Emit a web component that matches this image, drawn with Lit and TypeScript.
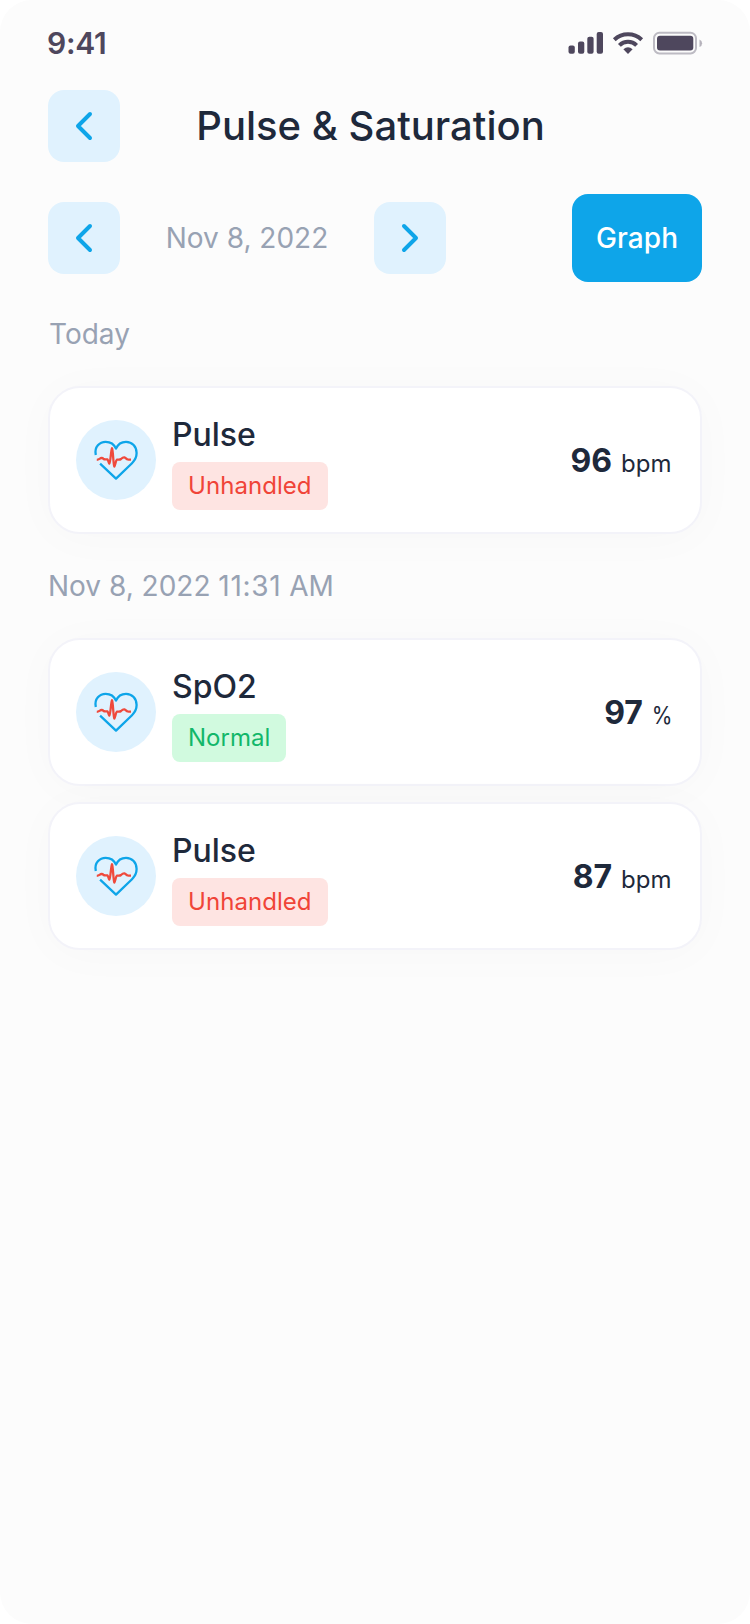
import { LitElement, html, css, svg } from "lit";
import { customElement, property } from "lit/decorators.js";
import { classMap } from "lit/directives/class-map.js";

interface Reading {
  name: string;
  status: "Unhandled" | "Normal";
  value: number;
  unit: string;
}

@customElement("status-bar")
class StatusBar extends LitElement {
  static styles = css`
    :host { display: flex; justify-content: space-between; height: 90px; box-sizing: border-box; padding: 26px 47px 0 47px; color: #4e475d; }
    .time { font-size: 30px; line-height: 34px; font-weight: 600; letter-spacing: -0.3px; font-feature-settings: "calt" 0; }
    .icons { display: block; }
  `;
  render() {
    return html`
      <span class="time">9:41</span>
      <svg class="icons" width="136" height="34" viewBox="0 0 136 34" fill="currentColor">
        <rect x="1.5" y="19.5" width="6.3" height="8.2" rx="2" />
        <rect x="11" y="15.5" width="6.3" height="12.2" rx="2" />
        <rect x="20.3" y="10.8" width="6.3" height="16.9" rx="2" />
        <rect x="29.7" y="6" width="6.3" height="21.7" rx="2" />
        <g fill="none" stroke="currentColor" stroke-width="4">
          <path d="M47.3 13.8A20 20 0 0 1 74.7 13.8" />
          <path d="M52.4 19.3A12.2 12.2 0 0 1 69.6 19.3" />
        </g>
        <path d="M61 28L56.4 23.3Q61 19.2 65.6 23.3Z" />
        <rect x="87" y="6.8" width="42" height="20.6" rx="5.5" fill="none" stroke="currentColor" stroke-width="2" opacity="0.36" />
        <rect x="90" y="9.7" width="36.3" height="14.8" rx="3" />
        <path d="M132.5 13.5v7.5a4 4 0 0 0 0-7.5z" opacity="0.4" />
      </svg>
    `;
  }
}

@customElement("arrow-button")
class ArrowButton extends LitElement {
  @property() direction: "left" | "right" = "left";
  static styles = css`
    :host { display: block; flex: none; }
    .button { display: flex; align-items: center; justify-content: center; width: 72px; height: 72px; padding: 0; border: 0; border-radius: 16px; background: #e0f2fe; color: #0ea5e9; }
    .arrow { display: block; }
  `;
  render() {
    const d = this.direction === "left" ? "M28 10L16 22L28 34" : "M16 10L28 22L16 34";
    return html`<button class="button" aria-label=${this.direction === "left" ? "Back" : "Next"}>
      <svg class="arrow" width="44" height="44" viewBox="0 0 44 44" fill="none" stroke="currentColor" stroke-width="4" stroke-linecap="round" stroke-linejoin="round"><path d=${d} /></svg>
    </button>`;
  }
}

const heart = svg`
  <path d="M19.8 35C18 26.6 23.8 21.8 29.7 21.8C34.3 21.8 38.2 24.4 40 28.6C41.8 24.4 45.4 21.8 50 21.8C56.2 21.8 60.6 26.8 60.6 33C60.6 37.6 58.6 40.6 56 43.2L40 58.6L24.1 43.7" stroke="#0ea5e9" />
  <path d="M20.8 39.8C22.6 39.8 23.2 38.9 24.6 38.2C25.7 37.8 26.8 38.1 27.7 39C28.6 39.7 30.4 39.1 31.4 39.4C32.3 40.2 32.5 42.8 33.4 43.6C34.4 43 35 30.3 36 28.3C37.1 30.3 37.3 44.9 38.3 46.5C39.5 45 39.7 40.3 40.9 39.7C42.4 39.3 43.8 40 45 39C46.3 37.8 47.3 37.2 48.4 37.4C49.8 37.8 50.3 39.2 51.7 39.4C52.8 39.5 53.5 39.7 55 39.7" stroke="#ef4a3c" />
`;

@customElement("reading-card")
class ReadingCard extends LitElement {
  @property({ attribute: false }) reading!: Reading;
  static styles = css`
    :host { display: block; }
    .card { display: flex; align-items: center; box-sizing: border-box; height: 148px; padding: 0 28.5px 0 26px; border: 2px solid #f3f3f9; border-radius: 32px; background: #fff; box-shadow: 0 4px 48px rgba(0, 0, 0, 0.025); color: #1e293b; }
    .icon { display: block; flex: none; width: 80px; height: 80px; border-radius: 50%; background: #e0f2fe; }
    .info { display: flex; flex-direction: column; align-items: flex-start; gap: 6px; margin-left: 16px; flex: 1; padding-top: 4px; }
    .name { font-size: 32px; line-height: 42px; font-weight: 500; }
    .badge { box-sizing: border-box; height: 48px; padding: 0 16px; border-radius: 8px; font-size: 24px; line-height: 48px; }
    .unhandled { background: #fee4e2; color: #f04438; letter-spacing: 0.06px; }
    .normal { background: #d1fadf; color: #12b76a; }
    .measure { display: flex; align-items: baseline; gap: 9px; padding-top: 2px; }
    .value { font-size: 32px; line-height: 40px; font-weight: 700; }
    .unit { font-size: 24px; }
    .percent { margin: 0 -1px 0 -3px; transform: scaleX(0.88); transform-origin: right; }
  `;
  render() {
    const r = this.reading;
    return html`<article class="card">
      <svg class="icon" viewBox="0 0 80 80" fill="none" stroke-width="2.3" stroke-linejoin="round">${heart}</svg>
      <div class="info">
        <span class="name">${r.name}</span>
        <span class="badge ${r.status.toLowerCase()}">${r.status}</span>
      </div>
      <div class="measure"><span class="value">${r.value}</span><span class=${classMap({ unit: true, percent: r.unit === "%" })}>${r.unit}</span></div>
    </article>`;
  }
}

@customElement("app-root")
class AppRoot extends LitElement {
  static styles = css`
    :host { display: block; height: 1624px; background: #fff; font-family: Inter, "Liberation Sans", sans-serif; }
    .screen { height: 100%; border-radius: 32px; background: #fcfcfc; overflow: hidden; }
    .content { padding: 0 48px; }
    .header { display: grid; grid-template-columns: 72px 1fr 72px; align-items: center; }
    .title { margin: 0; font-size: 40px; line-height: 48px; font-weight: 500; color: #1e293b; text-align: center; padding-right: 9px; white-space: nowrap; }
    .toolbar { display: flex; align-items: center; margin-top: 32px; height: 88px; }
    .date { width: 254px; text-align: center; }
    .muted { font-size: 28px; line-height: 36px; color: #98a2b3; }
    .graph { margin-left: auto; width: 130px; height: 88px; padding: 0; border: 0; border-radius: 16px; background: #0ea5e9; color: #fff; font: 450 28px/36px Inter, "Liberation Sans", sans-serif; letter-spacing: 0.1px; }
    .label { display: block; margin: 34px 0; }
    .day { padding-left: 1px; }
    .clock { letter-spacing: 0.7px; }
    .cards { display: grid; gap: 16px; }
  `;
  render() {
    const today: Reading[] = [{ name: "Pulse", status: "Unhandled", value: 96, unit: "bpm" }];
    const earlier: Reading[] = [
      { name: "SpO2", status: "Normal", value: 97, unit: "%" },
      { name: "Pulse", status: "Unhandled", value: 87, unit: "bpm" },
    ];
    const list = (items: Reading[]) =>
      html`<div class="cards">${items.map((r) => html`<reading-card .reading=${r}></reading-card>`)}</div>`;
    return html`<main class="screen">
      <status-bar></status-bar>
      <div class="content">
        <header class="header">
          <arrow-button></arrow-button>
          <h1 class="title">Pulse &amp; Saturation</h1>
        </header>
        <div class="toolbar">
          <arrow-button></arrow-button>
          <span class="date muted">Nov 8, 2022</span>
          <arrow-button direction="right"></arrow-button>
          <button class="graph">Graph</button>
        </div>
        <span class="label day muted">Today</span>
        ${list(today)}
        <span class="label muted">Nov 8, 2022 <span class="clock">11:31</span> AM</span>
        ${list(earlier)}
      </div>
    </main>`;
  }
}
